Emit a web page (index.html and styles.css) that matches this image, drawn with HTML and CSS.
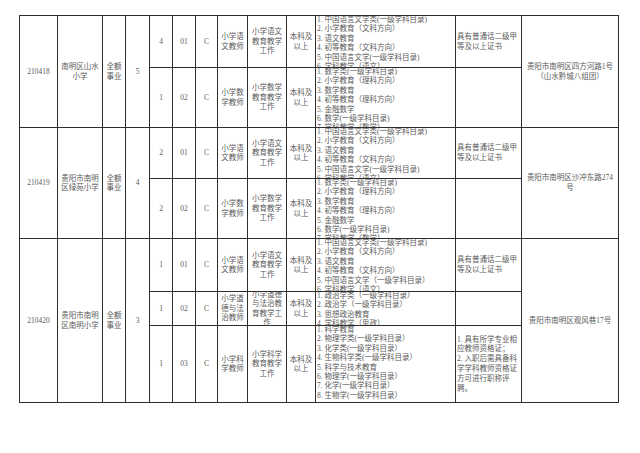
FILE: index.html
```html
<!DOCTYPE html>
<html lang="zh-CN">
<head>
<meta charset="utf-8">
<title>岗位表</title>
<link rel="stylesheet" href="styles.css">
</head>
<body>
<div class="page">
  <div class="grid">
    <!-- 210418 -->
    <div class="c sp2">210418</div>
    <div class="c sp2">南明区山水小学</div>
    <div class="c sp2 pad1">全额事业</div>
    <div class="c sp2">5</div>
    <div class="c">4</div>
    <div class="c">01</div>
    <div class="c">C</div>
    <div class="c">小学语文教师</div>
    <div class="c pad2">小学语文教育教学工作</div>
    <div class="c">本科及以上</div>
    <div class="list">
      <div>1. 中国语言文学类(一级学科目录)</div>
      <div>2. 小学教育（文科方向）</div>
      <div>3. 语文教育</div>
      <div>4. 初等教育（文科方向）</div>
      <div>5. 中国语言文学(一级学科目录)</div>
      <div>6. 学科教学（语文）</div>
    </div>
    <div class="req">具有普通话二级甲等及以上证书</div>
    <div class="c sp2 addr">贵阳市南明区四方河路1号（山水黔城八组团）</div>
    <div class="c">1</div>
    <div class="c">02</div>
    <div class="c">C</div>
    <div class="c">小学数学教师</div>
    <div class="c pad2">小学数学教育教学工作</div>
    <div class="c">本科及以上</div>
    <div class="list">
      <div>1. 数学类(一级学科目录)</div>
      <div>2. 小学教育（理科方向）</div>
      <div>3. 数学教育</div>
      <div>4. 初等教育（理科方向）</div>
      <div>5. 金融数学</div>
      <div>6. 数学(一级学科目录)</div>
      <div>7. 学科教学（数学）</div>
    </div>
    <div class="req"></div>

    <!-- 210419 -->
    <div class="c sp2">210419</div>
    <div class="c sp2">贵阳市南明区绿苑小学</div>
    <div class="c sp2 pad1">全额事业</div>
    <div class="c sp2">4</div>
    <div class="c">2</div>
    <div class="c">01</div>
    <div class="c">C</div>
    <div class="c">小学语文教师</div>
    <div class="c pad2">小学语文教育教学工作</div>
    <div class="c">本科及以上</div>
    <div class="list">
      <div>1. 中国语言文学类(一级学科目录)</div>
      <div>2. 小学教育（文科方向）</div>
      <div>3. 语文教育</div>
      <div>4. 初等教育（文科方向）</div>
      <div>5. 中国语言文学(一级学科目录)</div>
      <div>6. 学科教学（语文）</div>
    </div>
    <div class="req">具有普通话二级甲等及以上证书</div>
    <div class="c sp2 addr">贵阳市南明区沙冲东路274号</div>
    <div class="c">2</div>
    <div class="c">02</div>
    <div class="c">C</div>
    <div class="c">小学数学教师</div>
    <div class="c pad2">小学数学教育教学工作</div>
    <div class="c">本科及以上</div>
    <div class="list">
      <div>1. 数学类(一级学科目录)</div>
      <div>2. 小学教育（理科方向）</div>
      <div>3. 数学教育</div>
      <div>4. 初等教育（理科方向）</div>
      <div>5. 金融数学</div>
      <div>6. 数学(一级学科目录)</div>
      <div>7. 学科教学（数学）</div>
    </div>
    <div class="req"></div>

    <!-- 210420 -->
    <div class="c sp3">210420</div>
    <div class="c sp3">贵阳市南明区南明小学</div>
    <div class="c sp3 pad1">全额事业</div>
    <div class="c sp3">3</div>
    <div class="c">1</div>
    <div class="c">01</div>
    <div class="c">C</div>
    <div class="c">小学语文教师</div>
    <div class="c pad2">小学语文教育教学工作</div>
    <div class="c">本科及以上</div>
    <div class="list">
      <div>1. 中国语言文学类(一级学科目录)</div>
      <div>2. 小学教育（文科方向）</div>
      <div>3. 语文教育</div>
      <div>4. 初等教育（文科方向）</div>
      <div>5. 中国语言文学（一级学科目录）</div>
      <div>6. 学科教学（语文）</div>
    </div>
    <div class="req">具有普通话二级甲等及以上证书</div>
    <div class="c sp3 addr">贵阳市南明区观风巷17号</div>
    <div class="c">1</div>
    <div class="c">02</div>
    <div class="c">C</div>
    <div class="c">小学道德与法治教师</div>
    <div class="c pad2">小学道德与法治教育教学工作</div>
    <div class="c">本科及以上</div>
    <div class="list">
      <div>1. 政治学类（一级学科目录）</div>
      <div>2. 政治学（一级学科目录）</div>
      <div>3. 思想政治教育</div>
      <div>4. 学科教学（思政）</div>
    </div>
    <div class="req"></div>
    <div class="c">1</div>
    <div class="c">03</div>
    <div class="c">C</div>
    <div class="c">小学科学教师</div>
    <div class="c pad2">小学科学教育教学工作</div>
    <div class="c">本科及以上</div>
    <div class="list">
      <div>1. 科学教育</div>
      <div>2. 物理学类(一级学科目录）</div>
      <div>3. 化学类(一级学科目录）</div>
      <div>4. 生物科学类(一级学科目录）</div>
      <div>5. 科学与技术教育</div>
      <div>6. 物理学(一级学科目录）</div>
      <div>7. 化学(一级学科目录）</div>
      <div>8. 生物学(一级学科目录）</div>
    </div>
    <div class="req">1. 具有所学专业相应教师资格证；<br>2. 入职后需具备科学学科教师资格证方可进行职称评聘。</div>
  </div>
</div>
</body>
</html>
```

FILE: styles.css
```css
html, body {
  margin: 0;
  padding: 0;
  background: #ffffff;
}

.page {
  padding: 15px 0 0 19px;
}

.grid {
  display: grid;
  width: max-content;
  grid-template-columns: 38px 45px 23px 24px 23px 23px 22px 30px 39px 29px 140px 66px 97px;
  grid-template-rows: 52px 60px 51px 60px 53px 34px 77px;
  border-top: 1px solid #2e2e2e;
  border-left: 1px solid #2e2e2e;
  font-family: "Liberation Serif", "Noto Sans CJK SC", serif;
  font-size: 7.5px;
  line-height: 9.4px;
  color: #5a5a5a;
}

.grid > div {
  border-right: 1px solid #2e2e2e;
  border-bottom: 1px solid #2e2e2e;
  overflow: hidden;
  min-width: 0;
  min-height: 0;
}

.c {
  display: flex;
  align-items: center;
  justify-content: center;
  text-align: center;
}

.sp2 {
  grid-row: span 2;
}

.sp3 {
  grid-row: span 3;
}

.pad1 {
  padding: 0 1px;
}

.pad2 {
  padding: 0 2px;
}

.addr {
  padding: 0 3px;
  line-height: 10px;
}

.list {
  padding: 0 0 0 1px;
  white-space: nowrap;
}

.list > div {
  position: relative;
  top: -1px;
}

.req {
  display: flex;
  align-items: center;
  padding: 0 2px 0 1px;
  line-height: 9.8px;
}
```
